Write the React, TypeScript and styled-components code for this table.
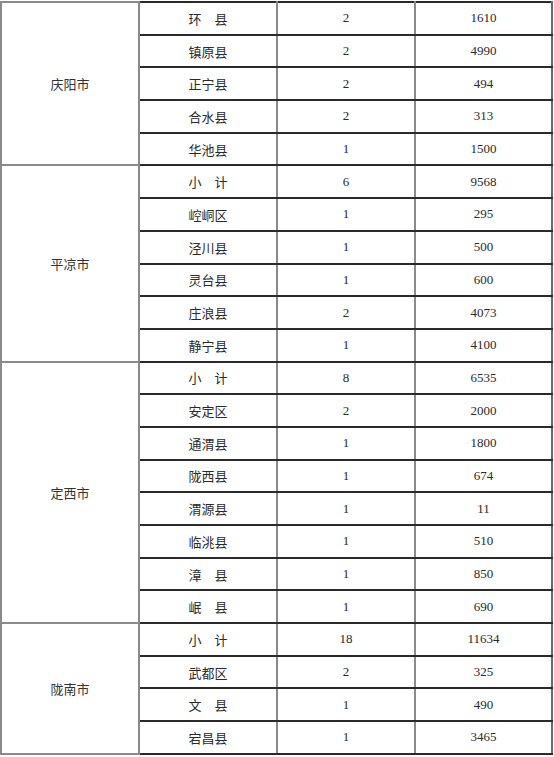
import styled, { createGlobalStyle } from 'styled-components';

interface County {
  name: string;
  count: number;
  amount: number;
}

interface City {
  city: string;
  counties: County[];
}

const data: City[] = [
  {
    city: '庆阳市',
    counties: [
      { name: '环　县', count: 2, amount: 1610 },
      { name: '镇原县', count: 2, amount: 4990 },
      { name: '正宁县', count: 2, amount: 494 },
      { name: '合水县', count: 2, amount: 313 },
      { name: '华池县', count: 1, amount: 1500 },
    ],
  },
  {
    city: '平凉市',
    counties: [
      { name: '小　计', count: 6, amount: 9568 },
      { name: '崆峒区', count: 1, amount: 295 },
      { name: '泾川县', count: 1, amount: 500 },
      { name: '灵台县', count: 1, amount: 600 },
      { name: '庄浪县', count: 2, amount: 4073 },
      { name: '静宁县', count: 1, amount: 4100 },
    ],
  },
  {
    city: '定西市',
    counties: [
      { name: '小　计', count: 8, amount: 6535 },
      { name: '安定区', count: 2, amount: 2000 },
      { name: '通渭县', count: 1, amount: 1800 },
      { name: '陇西县', count: 1, amount: 674 },
      { name: '渭源县', count: 1, amount: 11 },
      { name: '临洮县', count: 1, amount: 510 },
      { name: '漳　县', count: 1, amount: 850 },
      { name: '岷　县', count: 1, amount: 690 },
    ],
  },
  {
    city: '陇南市',
    counties: [
      { name: '小　计', count: 18, amount: 11634 },
      { name: '武都区', count: 2, amount: 325 },
      { name: '文　县', count: 1, amount: 490 },
      { name: '宕昌县', count: 1, amount: 3465 },
    ],
  },
];

const GlobalStyle = createGlobalStyle`
  html, body {
    margin: 0;
    padding: 0;
    background: #fff;
  }
  body {
    font-family: "Liberation Serif", "Noto Sans CJK SC", serif;
    color: #222;
  }
`;

const Table = styled.table`
  border-collapse: collapse;
  table-layout: fixed;
  width: 551px;
  margin: 1px 0 0 0;
`;

const Col = styled.col<{ $w: number }>`
  width: ${({ $w }) => $w}px;
`;

const Row = styled.tr`
  height: 32.7px;
`;

const CityCell = styled.td`
  text-align: center;
  vertical-align: middle;
  font-family: "Noto Sans CJK SC", sans-serif;
  font-size: 13px;
  color: #333;
  border: 2px solid #8a8a8a;
  padding: 0;
`;

const Cell = styled.td<{ $cjk?: boolean }>`
  text-align: center;
  vertical-align: middle;
  padding: 0;
  font-size: 13px;
  color: #2a2a2a;
  font-family: ${({ $cjk }) =>
    $cjk ? '"Noto Sans CJK SC", sans-serif' : '"Liberation Serif", serif'};
  border-top: 2px solid #2a2a2a;
  border-bottom: 2px solid #2a2a2a;
  border-left: 2px solid #8a8a8a;
  border-right: 2px solid #8a8a8a;
`;

const LastCell = styled(Cell)`
  border-left-color: #2a2a2a;
  border-right-color: #6a6a6a;
`;

export default function App() {
  return (
    <>
      <GlobalStyle />
      <Table>
        <colgroup>
          <Col $w={138} />
          <Col $w={138} />
          <Col $w={138} />
          <Col $w={137} />
        </colgroup>
        <tbody>
          {data.map(({ city, counties }) =>
            counties.map((c, idx) => (
              <Row key={city + idx}>
                {idx === 0 && (
                  <CityCell rowSpan={counties.length}>{city}</CityCell>
                )}
                <Cell $cjk>{c.name}</Cell>
                <Cell>{c.count}</Cell>
                <LastCell>{c.amount}</LastCell>
              </Row>
            ))
          )}
        </tbody>
      </Table>
    </>
  );
}
